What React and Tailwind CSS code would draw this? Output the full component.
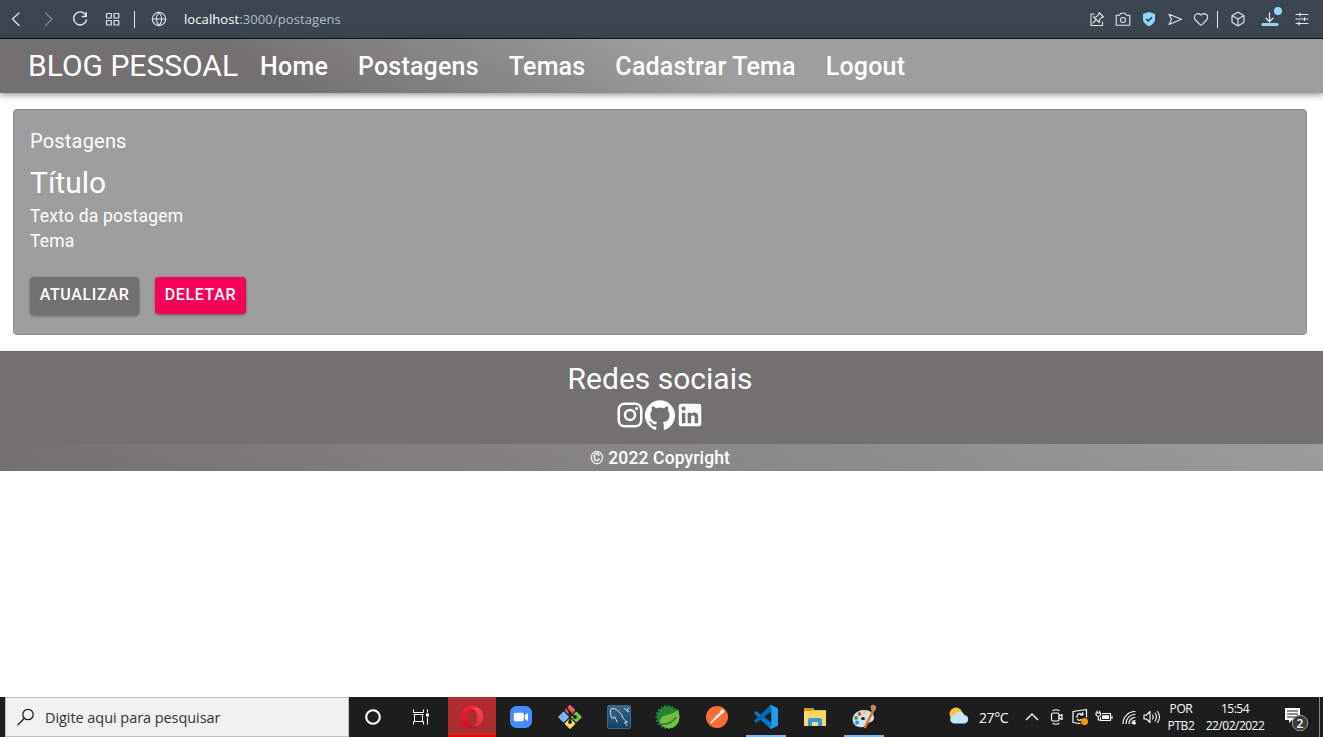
import React from "react";
import { Globe, Heart, Box } from "lucide-react";

const LINE = { fill: "none", stroke: "currentColor", strokeLinecap: "round", strokeLinejoin: "round" };

function BrowserBar() {
  return (
    <div className="flex h-[39px] shrink-0 items-center border-b border-[#101418] bg-[#3a4550] text-[#dfe5ea]">
      <svg className="ml-[8px] h-4 w-4" viewBox="0 0 16 16" {...LINE} strokeWidth="1.3"><path d="M11 2L4.5 8l6.5 6.500" /></svg>
      <svg className="ml-[17px] h-4 w-4 text-[#7b858e]" viewBox="0 0 16 16" {...LINE} strokeWidth="1.3"><path d="M4.5 2L11 8l-6.500 6.500" /></svg>
      <svg className="ml-[15px] h-4 w-4" viewBox="0 0 16 16" {...LINE} strokeWidth="1.4"><path d="M14 4.5A6.5 6.5 0 1 0 14.5 9M14.300 1.500v4h-4" /></svg>
      <svg className="ml-[17px] h-4 w-4" viewBox="0 0 16 16" {...LINE} strokeWidth="1.2"><rect x="1.5" y="2.5" width="4.8" height="4.5" rx=".6" /><rect x="9" y="2.5" width="4.8" height="4.5" rx=".6" /><rect x="1.5" y="9.5" width="4.8" height="4.5" rx=".6" /><rect x="9" y="9.5" width="4.8" height="4.5" rx=".6" /></svg>
      <div className="ml-[13px] h-[17px] w-px bg-[#dfe5ea]" />
      <Globe className="ml-[16px] h-4 w-4" strokeWidth={1.6} />
      <div className="ml-[17px] pt-[1px] font-['Open_Sans','Noto_Sans',sans-serif] text-[13px] tracking-[0.09px] text-[#b3bcc4]"><span className="text-white">localhost</span>:3000/postagens</div>
      <div className="ml-auto flex items-center">
        <svg className="h-4 w-4" viewBox="0 0 16 16" {...LINE} strokeWidth="1.1"><path d="M5 3H2v11.500h11.500V11M10 1.500L14.500 6l-1.700.3-2.300 2.400-.2 2.800L4.500 6l2.800-.2 2.400-2.400zM7.300 8.700L4 12" /></svg>
        <svg className="ml-[10px] h-4 w-4" viewBox="0 0 16 16" {...LINE} strokeWidth="1.1"><path d="M1.200 4.200h3.300l1.200-2h4.600l1.200 2h3.300v10H1.200z" /><circle cx="8" cy="9" r="2.5" /></svg>
        <svg className="ml-[10px] h-4 w-4" viewBox="0 0 16 16"><path d="M8 1l6 2v5.500c0 3-2.500 5-6 6.800-3.500-1.800-6-3.800-6-6.800V3z" fill="#8fd8ff" /><path d="M5.200 8l2 2L11 6.200" fill="none" stroke="#26343f" strokeWidth="1.5" /></svg>
        <svg className="ml-[10px] h-4 w-4" viewBox="0 0 16 16" {...LINE} strokeWidth="1.1"><path d="M2 3.300L14.500 8.300 2 13.500l2.500-5.200z" /></svg>
        <Heart className="ml-[10px] h-4 w-4" strokeWidth={1.7} />
        <div className="ml-[8px] h-[17px] w-px bg-[#dfe5ea]" />
        <Box className="ml-[12px] h-4 w-4" strokeWidth={1.7} />
        <svg className="ml-[12px] h-[26px] w-[24px]" viewBox="0 0 24 26" {...LINE} strokeWidth="1.3"><path d="M11.500 7v8.500M8 12.200l3.500 3.500 3.500-3.500" /><path d="M5 18.500h14" stroke="#8fd8ff" strokeWidth="3" /><circle cx="20" cy="5" r="4" fill="#8fd8ff" stroke="none" /></svg>
        <svg className="mr-[13px] ml-[12px] h-4 w-4" viewBox="0 0 16 16" {...LINE} strokeWidth="1.2"><path d="M2 3.500h12M2 8h12M2 12.500h12M6 2v3M10.500 6.500v3M5 11v3" /></svg>
      </div>
    </div>
  );
}

const NAV = ["Home", "Postagens", "Temas", "Cadastrar Tema", "Logout"];

function Header() {
  return (
    <header className="relative z-10 flex h-[54px] shrink-0 items-center bg-[linear-gradient(30deg,#737071_21%,#9e9e9e_53%)] pl-[28px] font-[Roboto,sans-serif] text-white shadow-[0_2px_4px_-1px_rgba(0,0,0,0.2),0_4px_5px_0_rgba(0,0,0,0.14),0_1px_10px_0_rgba(0,0,0,0.12)]">
      <span className="text-[30px] leading-[54px]">BLOG PESSOAL</span>
      <nav className="ml-[22px] flex gap-[30px] pt-[2px] text-[25px] leading-[54px] font-medium tracking-[0.2px]">
        {NAV.map((n) => <a key={n}>{n}</a>)}
      </nav>
    </header>
  );
}

function PostCard() {
  return (
    <section className="mx-[13px] mt-[16px] mr-[16px] h-[226px] rounded-[4px] border border-[#8a8a8a] bg-[#9e9e9e] px-[16px] pt-[16px] font-[Roboto,sans-serif] text-white">
      <p className="text-[20px] leading-[30px] tracking-[0.2px]">Postagens</p>
      <h2 className="mt-[7px] text-[30px] leading-[40px]">Título</h2>
      <p className="mt-[1px] text-[17.5px] leading-[25px] tracking-[0.21px]">Texto da postagem</p>
      <p className="text-[17.5px] leading-[25px] tracking-[0.21px]">Tema</p>
      <div className="mt-[23px] flex items-start gap-[16px] text-[16px] font-medium tracking-[0.65px]">
        <button className="h-[38px] w-[109px] rounded-[4px] bg-[#737071] pb-[3px] shadow-[0_1px_3px_rgba(0,0,0,0.4)]">ATUALIZAR</button>
        <button className="h-[37px] w-[91px] rounded-[4px] bg-[#f50057] pb-[2px] shadow-[0_1px_3px_rgba(0,0,0,0.4)]">DELETAR</button>
      </div>
    </section>
  );
}

const SOCIAL = [
  "M7.8 2h8.4C19.4 2 22 4.6 22 7.8v8.4a5.8 5.8 0 0 1-5.8 5.8H7.8C4.6 22 2 19.4 2 16.2V7.8A5.8 5.8 0 0 1 7.8 2m-.2 2A3.6 3.6 0 0 0 4 7.6v8.8C4 18.39 5.61 20 7.6 20h8.8a3.6 3.6 0 0 0 3.6-3.6V7.6C20 5.61 18.39 4 16.4 4H7.6m9.65 1.5a1.25 1.25 0 0 1 1.25 1.25A1.25 1.25 0 0 1 17.25 8 1.25 1.25 0 0 1 16 6.75a1.25 1.25 0 0 1 1.25-1.25M12 7a5 5 0 0 1 5 5 5 5 0 0 1-5 5 5 5 0 0 1-5-5 5 5 0 0 1 5-5m0 2a3 3 0 0 0-3 3 3 3 0 0 0 3 3 3 3 0 0 0 3-3 3 3 0 0 0-3-3z",
  "M12 .3a12 12 0 0 0-3.8 23.4c.6.1.8-.3.8-.6v-2c-3.3.7-4-1.6-4-1.6-.6-1.4-1.4-1.8-1.4-1.8-1-.7.1-.7.1-.7 1.2 0 1.9 1.2 1.9 1.2 1 1.8 2.8 1.3 3.5 1 0-.8.4-1.3.7-1.6-2.7-.3-5.5-1.3-5.5-6 0-1.2.5-2.3 1.3-3.1-.2-.4-.6-1.6 0-3.2 0 0 1-.3 3.4 1.2a11.5 11.5 0 0 1 6 0c2.3-1.5 3.3-1.2 3.3-1.2.6 1.6.2 2.8 0 3.2.9.8 1.3 1.9 1.3 3.2 0 4.6-2.8 5.6-5.5 5.9.5.4.9 1 .9 2.2v3.3c0 .3.1.7.8.6A12 12 0 0 0 12 .3",
  "M19 3a2 2 0 0 1 2 2v14a2 2 0 0 1-2 2H5a2 2 0 0 1-2-2V5a2 2 0 0 1 2-2h14m-.5 15.5v-5.3a3.26 3.26 0 0 0-3.26-3.26c-.85 0-1.84.52-2.32 1.3v-1.11h-2.79v8.37h2.79v-4.93c0-.77.62-1.4 1.39-1.4a1.4 1.4 0 0 1 1.4 1.4v4.93h2.79M6.88 8.56a1.68 1.68 0 0 0 1.68-1.68c0-.93-.75-1.69-1.68-1.69a1.69 1.69 0 0 0-1.69 1.69c0 .93.76 1.68 1.69 1.68m1.39 9.94v-8.37H5.5v8.37h2.77z",
];

function Footer() {
  return (
    <footer className="mt-[16px] flex flex-col font-[Roboto,sans-serif] text-white">
      <div className="flex h-[93px] flex-col items-center bg-[#737071] pt-[8px] pr-[3px]">
        <h3 className="text-[30px] leading-[40px]">Redes sociais</h3>
        <div className="mt-[1px] flex">
          {SOCIAL.map((d) => <svg key={d} className="h-[30px] w-[30px]" viewBox="0 0 24 24" fill="currentColor"><path d={d} /></svg>)}
        </div>
      </div>
      <div className="flex h-[27px] items-center justify-center bg-[linear-gradient(30deg,#737071_0%,#9e9e9e_105%)] pt-[2px] pr-[3px] text-[17.5px] font-medium tracking-[0.13px]">© 2022 Copyright</div>
    </footer>
  );
}

function Slot({ children }) {
  return <div className="flex h-[40px] w-[49px] items-center justify-center">{children}</div>;
}

function TaskIcons() {
  return (
    <div className="flex">
      <div className="flex h-[40px] w-[48px] items-center justify-center"><svg className="h-5 w-5" viewBox="0 0 20 20"><circle cx="10" cy="10" r="6.8" fill="none" stroke="#fff" strokeWidth="2.1" /></svg></div>
      <div className="flex h-[40px] w-[51px] items-center justify-center pr-[3px]"><svg className="h-[18px] w-[18px]" viewBox="0 0 18 18" fill="none" stroke="#fff"><path d="M1.5 1.500v3h10v-3M1.500 16.500v-3h10v3M1.500 6.500h10M2.500 6.500v7M10.500 6.500v7M15.500 1.500v3M15.500 9.500v7" /><path d="M14 7h3" strokeWidth="3" /></svg></div>
      <div className="flex h-[40px] w-[48px] items-center justify-center border-b-2 border-[#f00] bg-[#ae2b2e]">
        <svg className="mt-[1px] h-6 w-6" viewBox="0 0 24 24"><defs><linearGradient id="op" x2="0" y2="1"><stop stopColor="#ff2038" /><stop offset="1" stopColor="#c50f1e" /></linearGradient><linearGradient id="op2" x2="0" y2="1"><stop stopColor="#ff4a5a" /><stop offset="1" stopColor="#c8353c" /></linearGradient></defs><path fillRule="evenodd" fill="url(#op)" d="M12 .7a11.3 11.3 0 1 0 0 22.6 11.300 11.300 0 0 0 0-22.600zm0 3c3.300 0 5 3.700 5 8.300s-1.700 8.300-5 8.300-5-3.700-5-8.300 1.700-8.300 5-8.300z" /><path fill="url(#op2)" d="M11 3.700c3-3 12.500-.8 12.300 8.300.2 9.100-9.300 11.300-12.300 8.300 4 1 6.500-3.400 6.500-8.300S15 2.700 11 3.700z" /></svg>
      </div>
      <Slot><svg className="h-6 w-6" viewBox="0 0 24 24"><rect x="1" y="1" width="22" height="22" rx="6.5" fill="#468bff" /><rect x="4.8" y="7.7" width="10" height="8.6" rx="1.8" fill="#fff" /><path d="M15.8 10.300L19 8v8l-3.200-2.300z" fill="#fff" /></svg></Slot>
      <Slot><svg className="h-6 w-6" viewBox="0 0 24 24"><rect x="8" y="1.3" width="8" height="8" rx="1" transform="rotate(45 12 5.3)" fill="#f05a5a" /><rect x="1.6" y="8" width="8" height="8" rx="1" transform="rotate(45 5.6 12)" fill="#7eb0ff" /><rect x="14.4" y="8" width="8" height="8" rx="1" transform="rotate(45 18.4 12)" fill="#71c63c" /><rect x="8" y="14.6" width="8" height="8" rx="1" transform="rotate(45 12 18.6)" fill="#ffe06b" /><path d="M8 2l4 5.500V17M12 8l5 4" stroke="#242424" strokeWidth="1.8" fill="none" /><circle cx="12" cy="17" r="1.9" fill="#242424" /><circle cx="17" cy="12" r="1.9" fill="#242424" /><circle cx="12" cy="8" r="1.8" fill="#242424" /></svg></Slot>
      <Slot><svg className="h-6 w-6" viewBox="0 0 24 24"><defs><linearGradient id="my" x2="0" y2="1"><stop stopColor="#3c6683" /><stop offset="1" stopColor="#0e4266" /></linearGradient></defs><rect x=".5" y=".5" width="23" height="23" rx="1.5" fill="url(#my)" stroke="#3c6885" /><path d="M5.500 14C3 10 3 4 4.500 3.500 9 3 13.500 7 15.500 12c.5 2 2.500 3.500 5 5l-3 .5 3 3.500M5.500 14l2-2.500 3 6M17 3l2.500 2.500M21.500 2.500L20 6l2 1" fill="none" stroke="#e6f0f5" strokeWidth=".9" /></svg></Slot>
      <Slot><svg className="h-[26px] w-[26px]" viewBox="0 0 26 26"><circle cx="12.5" cy="13" r="10.5" fill="#258239" /><circle cx="12.5" cy="13" r="11" fill="none" stroke="#258239" strokeWidth="2" strokeDasharray="2 1.7" /><path d="M23 5c1 4 2 8 .8 12-2 6-8 8.500-13.500 6.500-4-1.500-7-5-4.500-9C8.500 9.500 18 12 23 5z" fill="#77bd43" /><path d="M5 20c6 1 12-1 16-7" fill="none" stroke="#287a35" strokeWidth="1.5" /></svg></Slot>
      <Slot><svg className="h-6 w-6" viewBox="0 0 24 24"><circle cx="12" cy="12" r="11" fill="#ff6c37" /><path d="M6 18l7-8" stroke="#fff" strokeWidth="1.5" /><path d="M9.500 14l6-7.500 1.800 1.800-6.500 6.200z" fill="#fff" /><circle cx="17.3" cy="6.6" r="2" fill="#fff" /></svg></Slot>
      <div className="flex h-[40px] w-[49px] justify-center"><div className="flex w-[40px] items-center justify-center border-b-2 border-[#76b9ed]"><svg className="mt-[2px] h-6 w-6" viewBox="0 0 24 24"><path d="M2.200 6L.3 7.500v1.300L16.500 24l1.500-6z" fill="#0078c8" /><path d="M2.200 18L.3 16.500v-1.300L16.500 0l1.500 6z" fill="#006bb3" /><path d="M17 0l6 2.800q1 .5 1 1.500v15.400q0 1-1 1.500L17 24q-1-.5-1-2l1.500-1V3L16 2q0-1.500 1-2z" fill="#1f9cf0" /><path d="M17.500 3h3v18h-3z" fill="#1f9cf0" /></svg></div></div>
      <Slot><svg className="h-6 w-6" viewBox="0 0 24 24"><path d="M1 3h9l1.500 2H23v16H1z" fill="#f2b830" /><path d="M1 6h22v15H1z" fill="#ffda68" /><path d="M1 3h9l1 1-2 2H1z" fill="#d99a13" /><path d="M5 21v-6q0-2 2-2h10q2 0 2 2v6h-4v-4H9v4z" fill="#3997e3" /></svg></Slot>
      <div className="flex h-[40px] w-[49px] justify-center"><div className="flex w-[40px] items-center justify-center border-b-2 border-[#76b9ed]"><svg className="mt-[2px] h-[26px] w-[26px]" viewBox="0 0 26 26"><path fillRule="evenodd" d="M2 18c-2-7 4-12 11-12 6 0 10 3 10 8 0 4-5 4-7 6-3 5-12 4-14-2zm8-3.500a2 1.500 0 1 0 4 0 2 1.500 0 1 0-4 0z" fill="#cfe4ee" /><circle cx="5" cy="14" r="1.9" fill="#48a13d" /><circle cx="8.500" cy="10" r="1.900" fill="#ea4d37" /><circle cx="13.5" cy="8.5" r="1.700" fill="#f3c944" /><circle cx="6" cy="18.500" r="1.9" fill="#328ad2" /><path d="M13.500 24L22 7" stroke="#d77f24" strokeWidth="2.5" /><path d="M20 6l-.5-4 2.500-1.500 3 1.500v3.500L22.500 8z" fill="#b98c64" /></svg></div></div>
    </div>
  );
}

function Tray() {
  return (
    <div className="ml-auto flex h-[40px] items-center text-white">
      <svg className="h-6 w-6" viewBox="0 0 24 24"><circle cx="9" cy="9" r="6.500" fill="#ffc338" /><path d="M7.500 18.500a4.300 4.300 0 0 1 0-8.600 5.500 5.500 0 0 1 10 .2 4.300 4.300 0 0 1 .5 8.400z" fill="#c9e3fb" /></svg>
      <span className="ml-[8px] w-[32px] pt-[1px] text-[14px] tracking-[-0.4px]">27°C</span>
      <svg className="ml-[13px] h-4 w-4" viewBox="0 0 16 16" {...LINE} strokeWidth="1.4"><path d="M2.500 10.500L8 5l5.500 5.500" /></svg>
      <svg className="ml-[9px] h-[18px] w-4" viewBox="0 0 16 18" {...LINE} strokeWidth="1.2"><rect x="2.5" y="5" width="7.5" height="8" rx="1.5" /><path d="M10 8l3-1.500v5L10 10M4 2.500q3-1.500 6 0M4 15.500q3 1.500 6 0" /></svg>
      <svg className="ml-[6px] h-[18px] w-[18px]" viewBox="0 0 18 18" {...LINE} strokeWidth="1.2"><path d="M15.500 9V1.500L2 3.500v11l7 1M11.500 7a3 3 0 0 0-5.500 1v1.500M11.800 4.500V7H9.500M6.500 11.500q2 1.500 3.500 0" /><circle cx="13.500" cy="13.500" r="3.500" fill="#ff9500" stroke="none" /></svg>
      <svg className="ml-[6px] h-[18px] w-[18px]" viewBox="0 0 18 18" {...LINE} strokeWidth="1.1"><path d="M2 3v2M4.500 3v2M1 5h4.500v2q-2.200 3-4.500 0zM3.200 8.500v3.500H5M7.500 5.500h8v7h-10v-3M17 8v2.500" /><path d="M7.500 7.800h6v2.700h-6z" fill="currentColor" /></svg>
      <svg className="ml-[8px] h-[18px] w-[18px]" viewBox="0 0 18 18" {...LINE} strokeWidth="1.1"><path d="M2 15.500A12 12 0 0 1 14 3.500M5 15.500a9 9 0 0 1 9-9M8 15.500a6 6 0 0 1 6-6M11 15.500a3 3 0 0 1 3-3" /><circle cx="13.200" cy="15" r="1.100" fill="currentColor" /></svg>
      <svg className="ml-[4px] h-[18px] w-[18px]" viewBox="0 0 18 18" {...LINE} strokeWidth="1.1"><path d="M1 7h2.500L7 3.500v11L3.500 11H1zM9.500 7q1.500 2 0 4M12 5q3 4 0 8M14.500 3.500q4 5.500 0 11" /></svg>
      <div className="ml-[5px] flex w-[30px] flex-col items-center text-[12px] leading-[17px] tracking-[-0.4px]"><span>POR</span><span>PTB2</span></div>
      <div className="ml-[7px] flex w-[64px] flex-col items-center text-[12px] leading-[17px] tracking-[-0.5px]"><span>15:54</span><span>22/02/2022</span></div>
      <div className="relative ml-[15px] h-[28px] w-[28px]">
        <svg className="h-[28px] w-[28px]" viewBox="0 0 28 28"><path d="M3 5h15v12H10l-3 3v-3H3z" fill="#fff" /><path d="M5 8h11M5 11h11M5 14h8" stroke="#1d1d1d" /><circle cx="18" cy="20" r="7.800" fill="#3c3c3c" stroke="#999" /></svg>
        <span className="absolute top-[13px] left-[14.5px] text-[12px] leading-[15px] font-semibold">2</span>
      </div>
      <div className="ml-[9px] h-[40px] w-px bg-[#888]" /><div className="w-[3px]" />
    </div>
  );
}

export default function App() {
  return (
    <div className="flex h-[737px] w-[1323px] flex-col overflow-hidden bg-white">
      <BrowserBar />
      <Header />
      <PostCard />
      <Footer />
      <div className="mt-auto flex h-[40px] shrink-0 items-center bg-[#1d1d1d] pl-[5px] font-['Open_Sans','Noto_Sans',sans-serif]">
        <div className="flex h-[40px] w-[344px] items-center border border-[#bdbdbd] bg-[#f1f1f1] pl-[11px] text-[#333]">
          <svg className="h-[18px] w-[18px]" viewBox="0 0 18 18" {...LINE} stroke="#222" strokeWidth="1.3"><circle cx="11" cy="6.5" r="5.2" /><path d="M7.300 10.300L1 16.700" /></svg>
          <span className="ml-[10px] pt-[1px] text-[14.5px] tracking-[-0.06px]">Digite aqui para pesquisar</span>
        </div>
        <TaskIcons />
        <Tray />
      </div>
    </div>
  );
}
